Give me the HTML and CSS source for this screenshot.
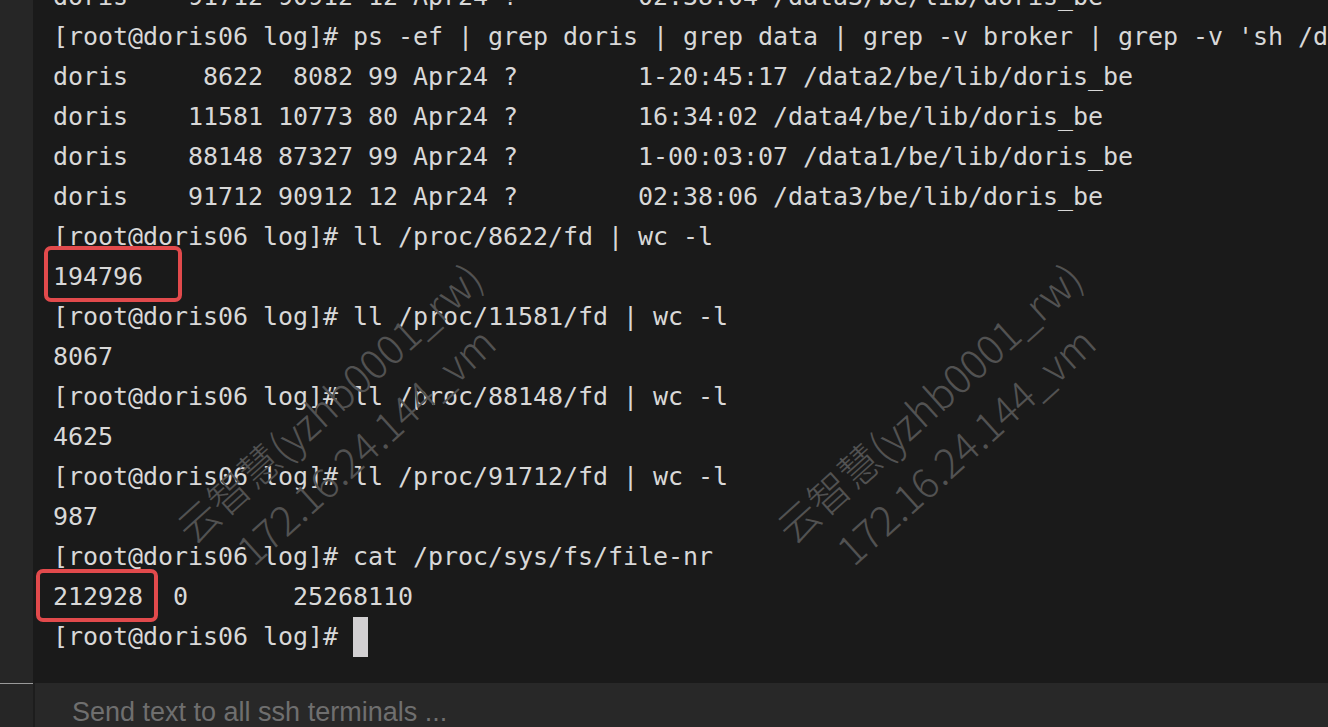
FILE: index.html
```html
<!DOCTYPE html>
<html lang="en">
<head>
<meta charset="utf-8">
<title>Terminal</title>
<link rel="stylesheet" href="styles.css">
</head>
<body>
<div class="app">
  <div class="gutter"></div>
  <div class="terminal">
<pre class="screen">doris    91712 90912 12 Apr24 ?        02:38:04 /data3/be/lib/doris_be
[root@doris06 log]# ps -ef | grep doris | grep data | grep -v broker | grep -v 'sh /data'
doris     8622  8082 99 Apr24 ?        1-20:45:17 /data2/be/lib/doris_be
doris    11581 10773 80 Apr24 ?        16:34:02 /data4/be/lib/doris_be
doris    88148 87327 99 Apr24 ?        1-00:03:07 /data1/be/lib/doris_be
doris    91712 90912 12 Apr24 ?        02:38:06 /data3/be/lib/doris_be
[root@doris06 log]# ll /proc/8622/fd | wc -l
194796
[root@doris06 log]# ll /proc/11581/fd | wc -l
8067
[root@doris06 log]# ll /proc/88148/fd | wc -l
4625
[root@doris06 log]# ll /proc/91712/fd | wc -l
987
[root@doris06 log]# cat /proc/sys/fs/file-nr
212928  0       25268110
[root@doris06 log]# <span class="cursor"> </span></pre>
    <div class="watermark wm-left"><span>云智慧(yzhb0001_rw)</span><span class="wm-ip">172.16.24.144_vm</span></div>
    <div class="watermark wm-right"><span>云智慧(yzhb0001_rw)</span><span class="wm-ip">172.16.24.144_vm</span></div>
    <div class="mark mark-fd"></div>
    <div class="mark mark-nr"></div>
  </div>
  <div class="gutter gutter-bottom"></div>
  <div class="input-bar">Send text to all ssh terminals ...</div>
</div>
</body>
</html>
```
FILE: styles.css
```css
html, body {
  margin: 0;
  padding: 0;
  background: #1a1a1a;
  overflow: hidden;
}

.app {
  width: 1328px;
  height: 727px;
  display: grid;
  grid-template-columns: 33px 1fr;
  grid-template-rows: 683px 44px;
}

.gutter {
  background: #262626;
}

.gutter-bottom {
  border-top: 1px solid #9a9a9a;
}

.terminal {
  position: relative;
  overflow: hidden;
  background: #1a1a1a;
  padding-left: 20px;
}

.screen {
  margin: -23px 0 0 0;
  font-family: "DejaVu Sans Mono", monospace;
  font-size: 25px;
  letter-spacing: -0.05px;
  line-height: 40px;
  color: #d8d8d8;
  white-space: pre;
}

.cursor {
  display: inline-block;
  width: 15px;
  height: 40px;
  vertical-align: top;
  background: #d2d0d2;
}

.watermark {
  position: absolute;
  display: flex;
  flex-direction: column;
  transform: rotate(-42deg);
  transform-origin: 0 0;
  font-family: "Noto Sans CJK SC", "Noto Sans", sans-serif;
  font-weight: 300;
  font-size: 41px;
  line-height: 56px;
  color: #525252;
  white-space: nowrap;
}

.wm-ip {
  padding-left: 30px;
}

.wm-left {
  left: 130px;
  top: 512px;
}

.wm-right {
  left: 730px;
  top: 512px;
}

.mark {
  position: absolute;
  border: 4px solid #e24a4c;
  border-radius: 7px;
  box-sizing: border-box;
}

.mark-fd {
  left: 11px;
  top: 246px;
  width: 138px;
  height: 56px;
}

.mark-nr {
  left: 3px;
  top: 569px;
  width: 122px;
  height: 53px;
}

.input-bar {
  background: #282828;
  border-left: 2px solid #1d1d1d;
  padding-left: 37px;
  font-family: "Liberation Sans", Arial, sans-serif;
  font-size: 27px;
  line-height: 44px;
  padding-top: 7px;
  color: #6f6f6f;
  white-space: nowrap;
  overflow: hidden;
}
```
